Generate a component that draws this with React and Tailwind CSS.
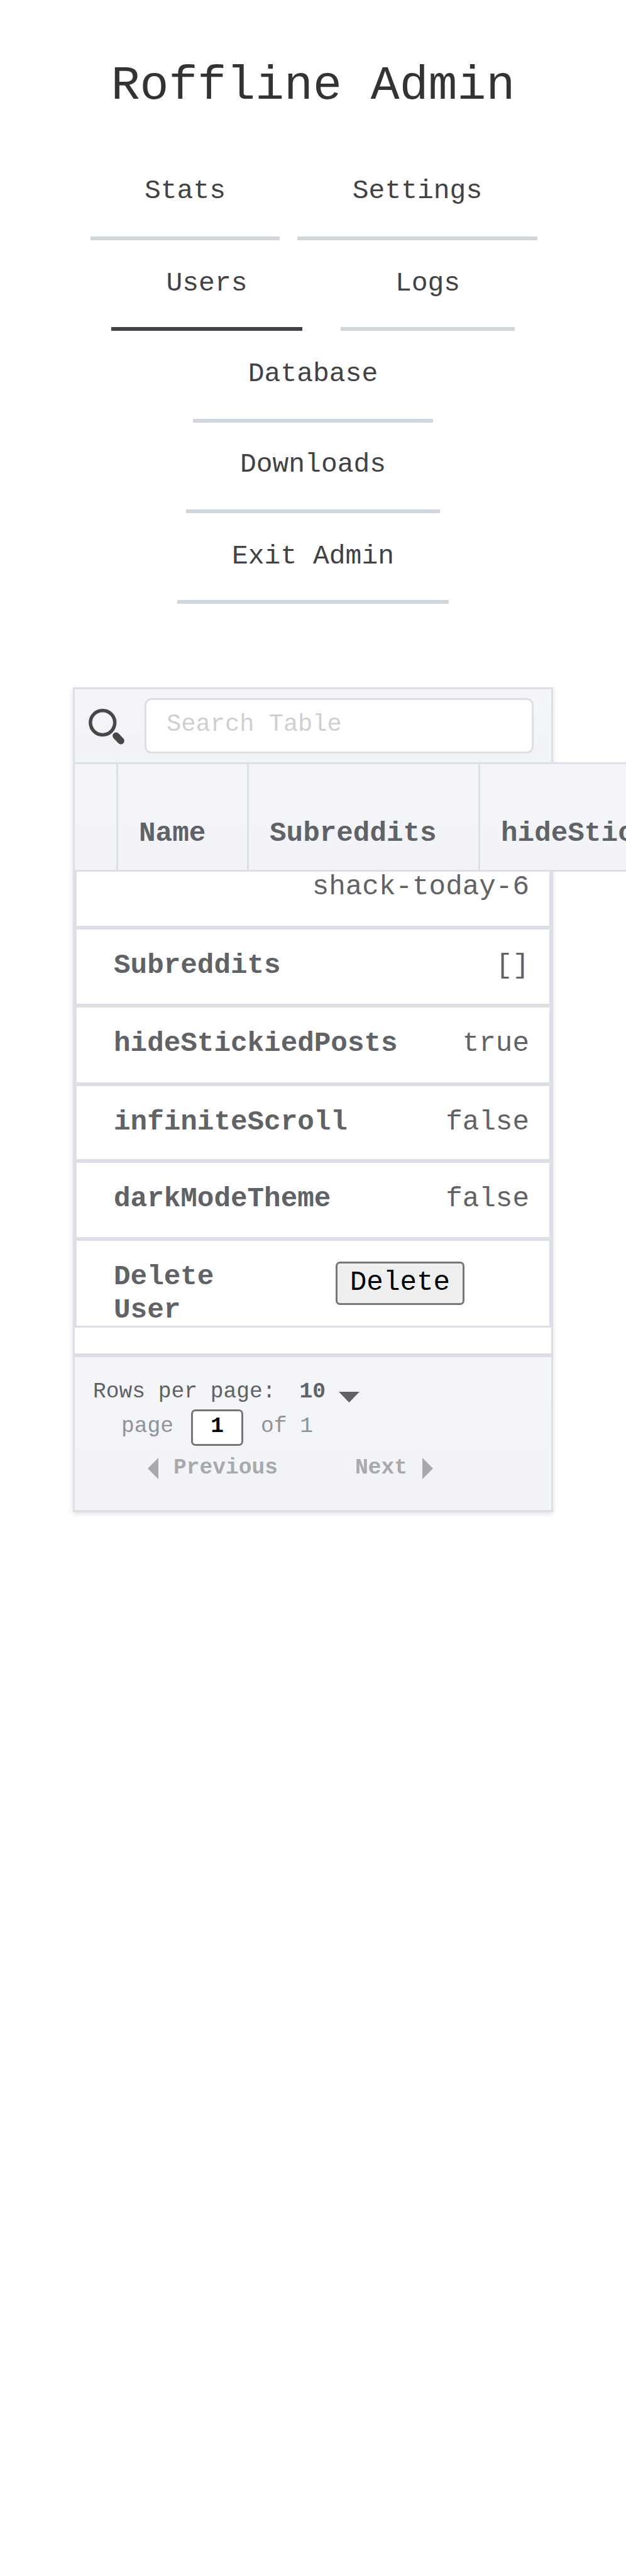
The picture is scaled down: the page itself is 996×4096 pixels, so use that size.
const tabRows = [
  {
    row: "h-[102px] pl-[144px] gap-[28px]",
    tabs: [
      { label: "Stats", width: "w-[301px]" },
      { label: "Settings", width: "w-[382px]" },
    ],
  },
  {
    row: "mt-[45px] h-[99px] pl-[177px] gap-[61px]",
    tabs: [
      { label: "Users", width: "w-[304px]", active: true },
      { label: "Logs", width: "w-[277px]" },
    ],
  },
  { row: "mt-[45px] h-[101px] justify-center", tabs: [{ label: "Database", width: "w-[382px]" }] },
  { row: "mt-[43px] h-[101px] justify-center", tabs: [{ label: "Downloads", width: "w-[404px]" }] },
  { row: "mt-[45px] h-[99px] justify-center", tabs: [{ label: "Exit Admin", width: "w-[432px]" }] },
];

const userFields = [
  { label: "Subreddits", value: "[]", height: "h-[124px]" },
  { label: "hideStickiedPosts", value: "true", height: "h-[125px]" },
  { label: "infiniteScroll", value: "false", height: "h-[122px]" },
  { label: "darkModeTheme", value: "false", height: "h-[124px]" },
];

function Tabs() {
  return (
    <nav className="mt-[97px] text-[43px] leading-[48px] text-[#424245]">
      {tabRows.map((r, i) => (
        <div key={i} className={`flex ${r.row}`}>
          {r.tabs.map((t) => (
            <a
              key={t.label}
              className={`block h-full shrink-0 border-b-6 text-center whitespace-nowrap ${t.width} ${
                t.active ? "border-[#424249]" : "border-[#d1d5dc]"
              }`}
            >
              {t.label}
            </a>
          ))}
        </div>
      ))}
    </nav>
  );
}

function SearchBar() {
  return (
    <div className="flex h-[116px] bg-linear-to-b from-[#f4f5f8] to-[#f1f3f6] pt-[14px] pl-[20px]">
      <svg className="mt-[14px] h-[62px] w-[62px] shrink-0" viewBox="0 0 67.2 67.2" fill="none" stroke="#484848">
        <circle cx="26.3" cy="27.2" r="21" strokeWidth="6" />
        <path d="M49.5 49.8L57.8 58.6" strokeWidth="12" strokeLinecap="round" />
      </svg>
      <input
        className="ml-[29px] h-[88px] w-[619px] rounded-[11px] border-3 border-[#dcdfe6] bg-white pb-[4px] pl-[32px] text-[38.73px] leading-[44px] placeholder:text-[#cfcfd1] placeholder:opacity-100"
        placeholder="Search Table"
      />
    </div>
  );
}

function ColumnHeads() {
  return (
    <div className="flex h-[174px] w-[1300px] border-y-3 border-[#dcdfe6] bg-linear-to-b from-[#f4f5f8] to-[#f1f3f6] text-[44.27px] leading-[52px] font-bold">
      <div className="w-[69px] shrink-0 border-r-3 border-[#dcdfe6]" />
      <div className="w-[208px] shrink-0 border-r-3 border-[#dcdfe6] pt-[84px] pl-[33px]">Name</div>
      <div className="w-[368px] shrink-0 border-r-3 border-[#dcdfe6] pt-[84px] pl-[33px]">Subreddits</div>
      <div className="shrink-0 pt-[84px] pl-[33px]">hideStickiedPosts</div>
    </div>
  );
}

function Footer() {
  return (
    <div className="h-[243px] bg-linear-to-b from-[#f4f5f8] to-[#f1f3f6] pt-[35px] text-[34.6px] leading-[40px] whitespace-nowrap">
      <div className="flex h-[40px] pl-[29px]">
        <span>Rows per page:</span>
        <span className="ml-[38px] font-bold">10</span>
        <svg className="mt-[20px] ml-[21px] h-[17px] w-[33px]" viewBox="0 0 33 17" fill="#606266">
          <path d="M0 0H33L16.5 17Z" />
        </svg>
      </div>
      <div className="mt-[8px] flex h-[58px] pl-[74px] leading-[54px] text-[#909399]">
        <span>page</span>
        <span className="ml-[28px] h-[58px] w-[83px] rounded-[7px] border-3 border-[#767676] bg-white text-center leading-[48px] font-bold text-black">
          1
        </span>
        <span className="ml-[28px]">of 1</span>
      </div>
      <div className="mt-[15px] flex h-[40px] pl-[116px] font-bold text-[#a8a9ad]">
        <svg className="mt-[4px] h-[34px] w-[17px]" viewBox="0 0 17 34" fill="currentColor">
          <path d="M17 0V34L0 17Z" />
        </svg>
        <span className="ml-[24px]">Previous</span>
        <span className="ml-[123px]">Next</span>
        <svg className="mt-[4px] ml-[24px] h-[34px] w-[17px]" viewBox="0 0 17 34" fill="currentColor">
          <path d="M0 0V34L17 17Z" />
        </svg>
      </div>
    </div>
  );
}

export default function App() {
  return (
    <div className="h-[4096px] w-[996px] overflow-hidden bg-white font-['Liberation_Mono',monospace]">
      <h1 className="mt-[91px] text-center text-[76.5px] leading-[92px] text-[#333333]">Roffline Admin</h1>
      <Tabs />
      <div className="mt-[133px] ml-[116px] w-[764px] border-3 border-[#dcdfe6] text-[#606266] shadow-[0_3px_8px_rgba(50,50,93,0.1),0_3px_6px_rgba(50,50,93,0.06)]">
        <SearchBar />
        <ColumnHeads />
        <div className="border-x-3 border-b-3 border-[#dcdfe6] bg-white text-[44.27px] leading-[52.6px]">
          <div className="h-[92px] border-b-6 border-[#dcdfe6] pr-[32px] text-right leading-[48px]">shack-today-6</div>
          {userFields.map((f) => (
            <div
              key={f.label}
              className={`flex justify-between border-b-6 border-[#dcdfe6] pt-[31px] pr-[32px] pl-[59px] ${f.height}`}
            >
              <span className="font-bold">{f.label}</span>
              <span>{f.value}</span>
            </div>
          ))}
          <div className="flex h-[135px] pt-[31px] pl-[59px]">
            <span className="w-[353px] pr-[150px] font-bold">Delete User</span>
            <button className="mt-[2px] h-[69px] w-[205px] rounded-[7px] border-3 border-[#767676] bg-[#efefef] pb-[4px] leading-[52px] text-black">
              Delete
            </button>
          </div>
        </div>
        <div className="h-[47px] border-b-6 border-[#dcdfe6] bg-white" />
        <Footer />
      </div>
    </div>
  );
}
